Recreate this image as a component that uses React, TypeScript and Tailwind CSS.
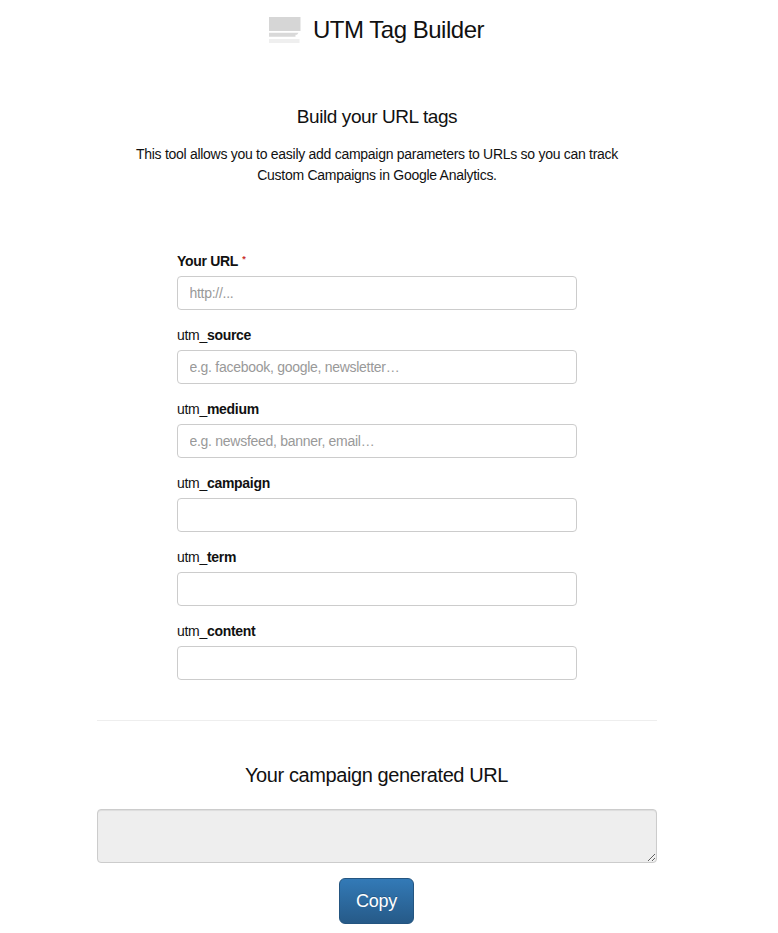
import { useState } from 'react'

type FieldProps = {
   prefix?: string
   label: string
   placeholder?: string
   required?: boolean
   value: string
   onChange: (value: string) => void
}

const Field = ({
   prefix,
   label,
   placeholder,
   required,
   value,
   onChange,
}: FieldProps) => {
   return (
      <div className="mb-[15px]">
         <label className="mb-[5px] block h-5 leading-5 tracking-[-0.3px]">
            {prefix}
            <b>{label}</b>
            {required && (
               <sup className="relative -top-1 ml-1 text-[9px] leading-none font-bold text-[#c9302c]">
                  *
               </sup>
            )}
         </label>
         <input
            value={value}
            onChange={(e) => onChange(e.target.value)}
            placeholder={placeholder}
            className="block h-[34px] w-full rounded border border-[#ccc] bg-white px-[11.5px] py-1.5 text-sm tracking-[-0.28px] text-[#555] outline-none placeholder:text-[#999]"
         />
      </div>
   )
}

const fields = [
   { prefix: 'utm_', label: 'source', placeholder: 'e.g. facebook, google, newsletter…' },
   { prefix: 'utm_', label: 'medium', placeholder: 'e.g. newsfeed, banner, email…' },
   { prefix: 'utm_', label: 'campaign' },
   { prefix: 'utm_', label: 'term' },
   { prefix: 'utm_', label: 'content' },
]

export default function App() {
   const [url, setUrl] = useState('')
   const [params, setParams] = useState<Record<string, string>>({})

   const query = fields
      .filter(({ label }) => params[label])
      .map(({ label }) => `utm_${label}=${encodeURIComponent(params[label])}`)
      .join('&')

   const result = url && query ? `${url}?${query}` : url

   return (
      <div className="flex h-[933px] flex-col items-center overflow-hidden bg-white pr-6 font-['Liberation_Sans',Arial,sans-serif] text-sm text-[#111]">
         <header className="mt-[14px] mr-px flex h-8 items-center gap-3">
            <svg width="32" height="32" viewBox="0 0 32 32">
               <path d="M0 3h31.5v14H0z" fill="#d6d6d6" />
               <path d="M0 18.8h29.5l-1.5 2h-1.5v2H0z" fill="#d9d9d9" />
               <path d="M0 25h30.5v4H0z" fill="#efefef" />
            </svg>
            <h1 className="text-2xl tracking-[-0.48px]">UTM Tag Builder</h1>
         </header>

         <h2 className="mt-[60px] text-[19px] leading-[21px] tracking-[-0.42px]">
            Build your URL tags
         </h2>
         <p className="mt-[17px] w-[500px] text-center leading-[21px] tracking-[-0.28px]">
            This tool allows you to easily add campaign parameters to URLs so
            you can track Custom Campaigns in Google Analytics.
         </p>

         <form className="mt-[65px] w-[400px]">
            <Field
               label="Your URL"
               placeholder="http://..."
               required
               value={url}
               onChange={setUrl}
            />
            {fields.map((field) => (
               <Field
                  key={field.label}
                  {...field}
                  value={params[field.label] ?? ''}
                  onChange={(value) =>
                     setParams({ ...params, [field.label]: value })
                  }
               />
            ))}
         </form>

         <hr className="mt-[25px] w-[560px] border-[#eee]" />

         <h2 className="mt-11 mr-px text-xl leading-5 tracking-[-0.4px]">
            Your campaign generated URL
         </h2>
         <textarea
            readOnly
            value={result}
            className="mt-6 block h-[54px] w-[560px] shrink-0 rounded border border-[#ccc] bg-[#eee] px-3 py-1.5 text-[#555] shadow-[inset_0_1px_1px_rgba(0,0,0,0.075)] outline-none"
         />
         <button
            onClick={() => navigator.clipboard.writeText(result)}
            className="mt-[15px] mr-px h-[46px] w-[75px] shrink-0 rounded-md border border-[#245580] bg-linear-to-b from-[#337ab7] to-[#265a88] text-lg tracking-[-0.2px] text-white [text-shadow:0_-1px_0_rgba(0,0,0,0.2)]"
         >
            Copy
         </button>
      </div>
   )
}
